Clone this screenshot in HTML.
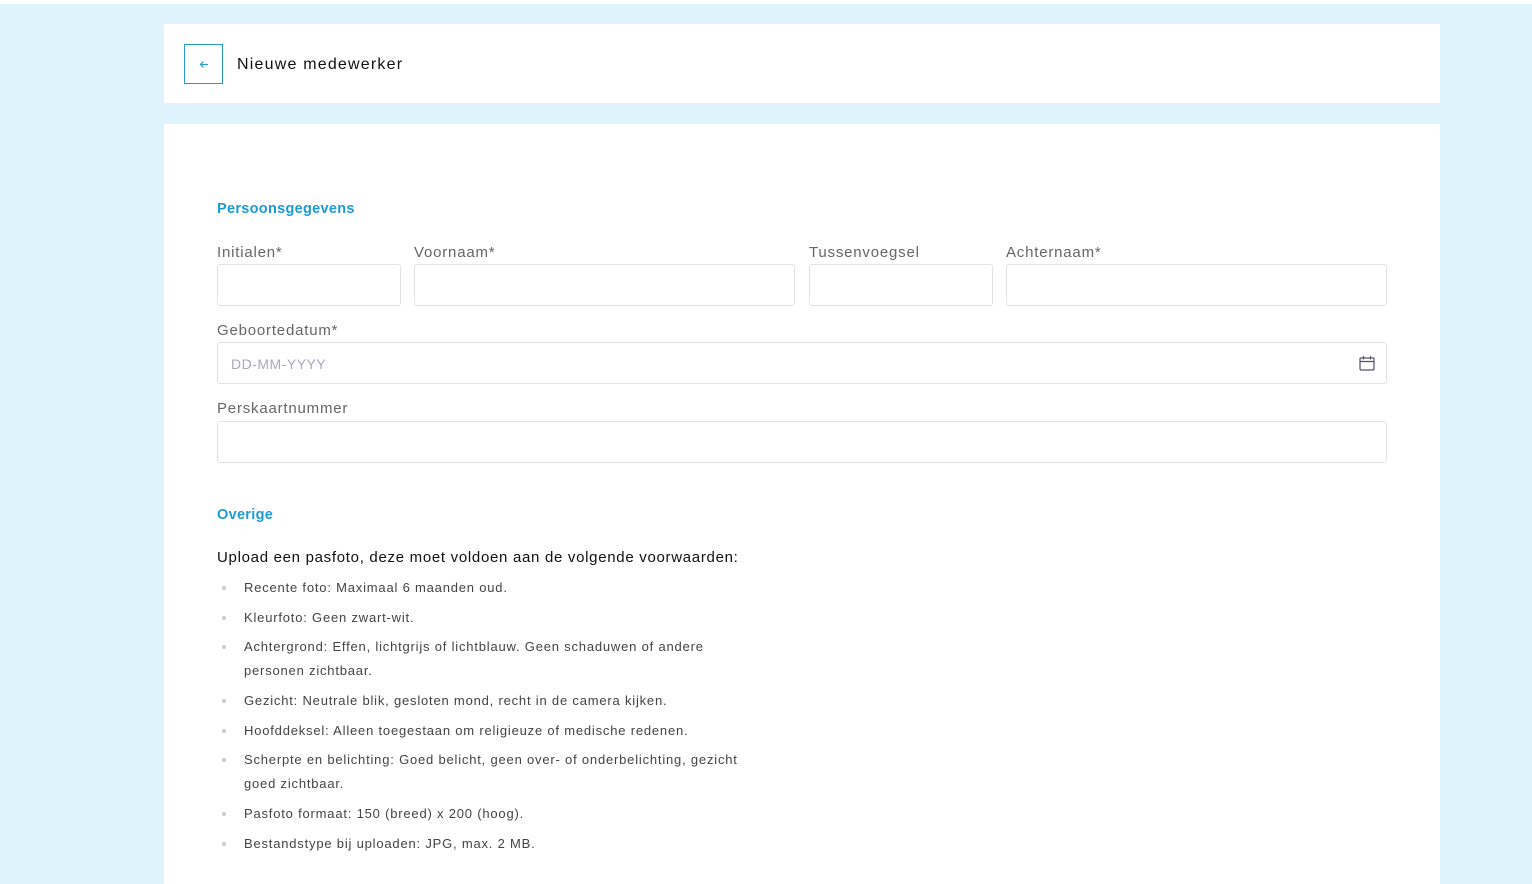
<!DOCTYPE html>
<html><head><meta charset="utf-8"><style>
*{margin:0;padding:0;box-sizing:border-box}
body{width:1532px;height:877px;overflow:hidden;background:#dff3fc;font-family:"Liberation Sans",sans-serif;position:relative}
.top{position:absolute;left:0;top:0;width:1532px;height:4px;background:#fff}
.card{position:absolute;background:#fff;left:164px;width:1276px}
.back{position:absolute;left:184px;top:44px;width:39px;height:40px;border:1px solid #2a9bc7}
.abs{position:absolute;white-space:nowrap}
.h{color:#1e9ad6;font-size:14.5px;font-weight:bold;letter-spacing:0.3px}
.lbl{color:#666;font-size:15px;letter-spacing:0.8px}
.inp{position:absolute;height:42px;border:1px solid #e3e3e3;border-radius:3px;background:#fff}
.li{position:absolute;left:244px;font-size:13px;color:#444;line-height:24px;white-space:nowrap;letter-spacing:0.8px}
.dot{position:absolute;left:222px;width:4px;height:4px;border-radius:2px;background:#ccc}
</style></head><body>
<div class="top"></div>
<div class="card" style="top:24px;height:79px"></div>
<div class="back"><svg style="position:absolute;left:14px;top:15px" width="10" height="9" viewBox="0 0 10 9" fill="none" stroke="#2a9bc7" stroke-width="1.2"><path d="M9 4.5H1.5M4.5 1.5L1.5 4.5L4.5 7.5"/></svg></div>
<div class="abs" style="left:237px;top:56px;font-size:16px;color:#111;letter-spacing:1.2px">Nieuwe medewerker</div>
<div class="card" style="top:124px;height:760px"></div>
<div class="abs h" style="left:217px;top:201px">Persoonsgegevens</div>
<div class="abs lbl" style="left:217px;top:244px">Initialen*</div>
<div class="abs lbl" style="left:414px;top:244px">Voornaam*</div>
<div class="abs lbl" style="left:809px;top:244px">Tussenvoegsel</div>
<div class="abs lbl" style="left:1006px;top:244px">Achternaam*</div>
<div class="inp" style="left:217px;top:264px;width:184px"></div>
<div class="inp" style="left:414px;top:264px;width:381px"></div>
<div class="inp" style="left:809px;top:264px;width:184px"></div>
<div class="inp" style="left:1006px;top:264px;width:381px"></div>
<div class="abs lbl" style="left:217px;top:322px">Geboortedatum*</div>
<div class="inp" style="left:217px;top:342px;width:1170px"></div>
<div class="abs" style="left:231px;top:356px;font-size:14px;color:#aab;letter-spacing:0.5px">DD-MM-YYYY</div>
<svg class="abs" style="left:1359px;top:355px" width="16" height="16" viewBox="0 0 16 16" fill="none" stroke="#556" stroke-width="1.2"><rect x="1" y="3" width="14" height="12" rx="1"/><path d="M1 6.5H15M4.5 1V4.5M11.5 1V4.5"/></svg>
<div class="abs lbl" style="left:217px;top:400px">Perskaartnummer</div>
<div class="inp" style="left:217px;top:421px;width:1170px"></div>
<div class="abs h" style="left:217px;top:507px">Overige</div>
<div class="abs" style="left:217px;top:549px;font-size:15px;color:#111;letter-spacing:0.7px">Upload een pasfoto, deze moet voldoen aan de volgende voorwaarden:</div>
<div class="dot" style="top:586px"></div><div class="li" style="top:576px">Recente foto: Maximaal 6 maanden oud.</div>
<div class="dot" style="top:616px"></div><div class="li" style="top:606px">Kleurfoto: Geen zwart-wit.</div>
<div class="dot" style="top:645px"></div><div class="li" style="top:635px">Achtergrond: Effen, lichtgrijs of lichtblauw. Geen schaduwen of andere<br>personen zichtbaar.</div>
<div class="dot" style="top:699px"></div><div class="li" style="top:689px">Gezicht: Neutrale blik, gesloten mond, recht in de camera kijken.</div>
<div class="dot" style="top:729px"></div><div class="li" style="top:719px">Hoofddeksel: Alleen toegestaan om religieuze of medische redenen.</div>
<div class="dot" style="top:758px"></div><div class="li" style="top:748px">Scherpte en belichting: Goed belicht, geen over- of onderbelichting, gezicht<br>goed zichtbaar.</div>
<div class="dot" style="top:812px"></div><div class="li" style="top:802px">Pasfoto formaat: 150 (breed) x 200 (hoog).</div>
<div class="dot" style="top:842px"></div><div class="li" style="top:832px">Bestandstype bij uploaden: JPG, max. 2 MB.</div>
</body></html>
